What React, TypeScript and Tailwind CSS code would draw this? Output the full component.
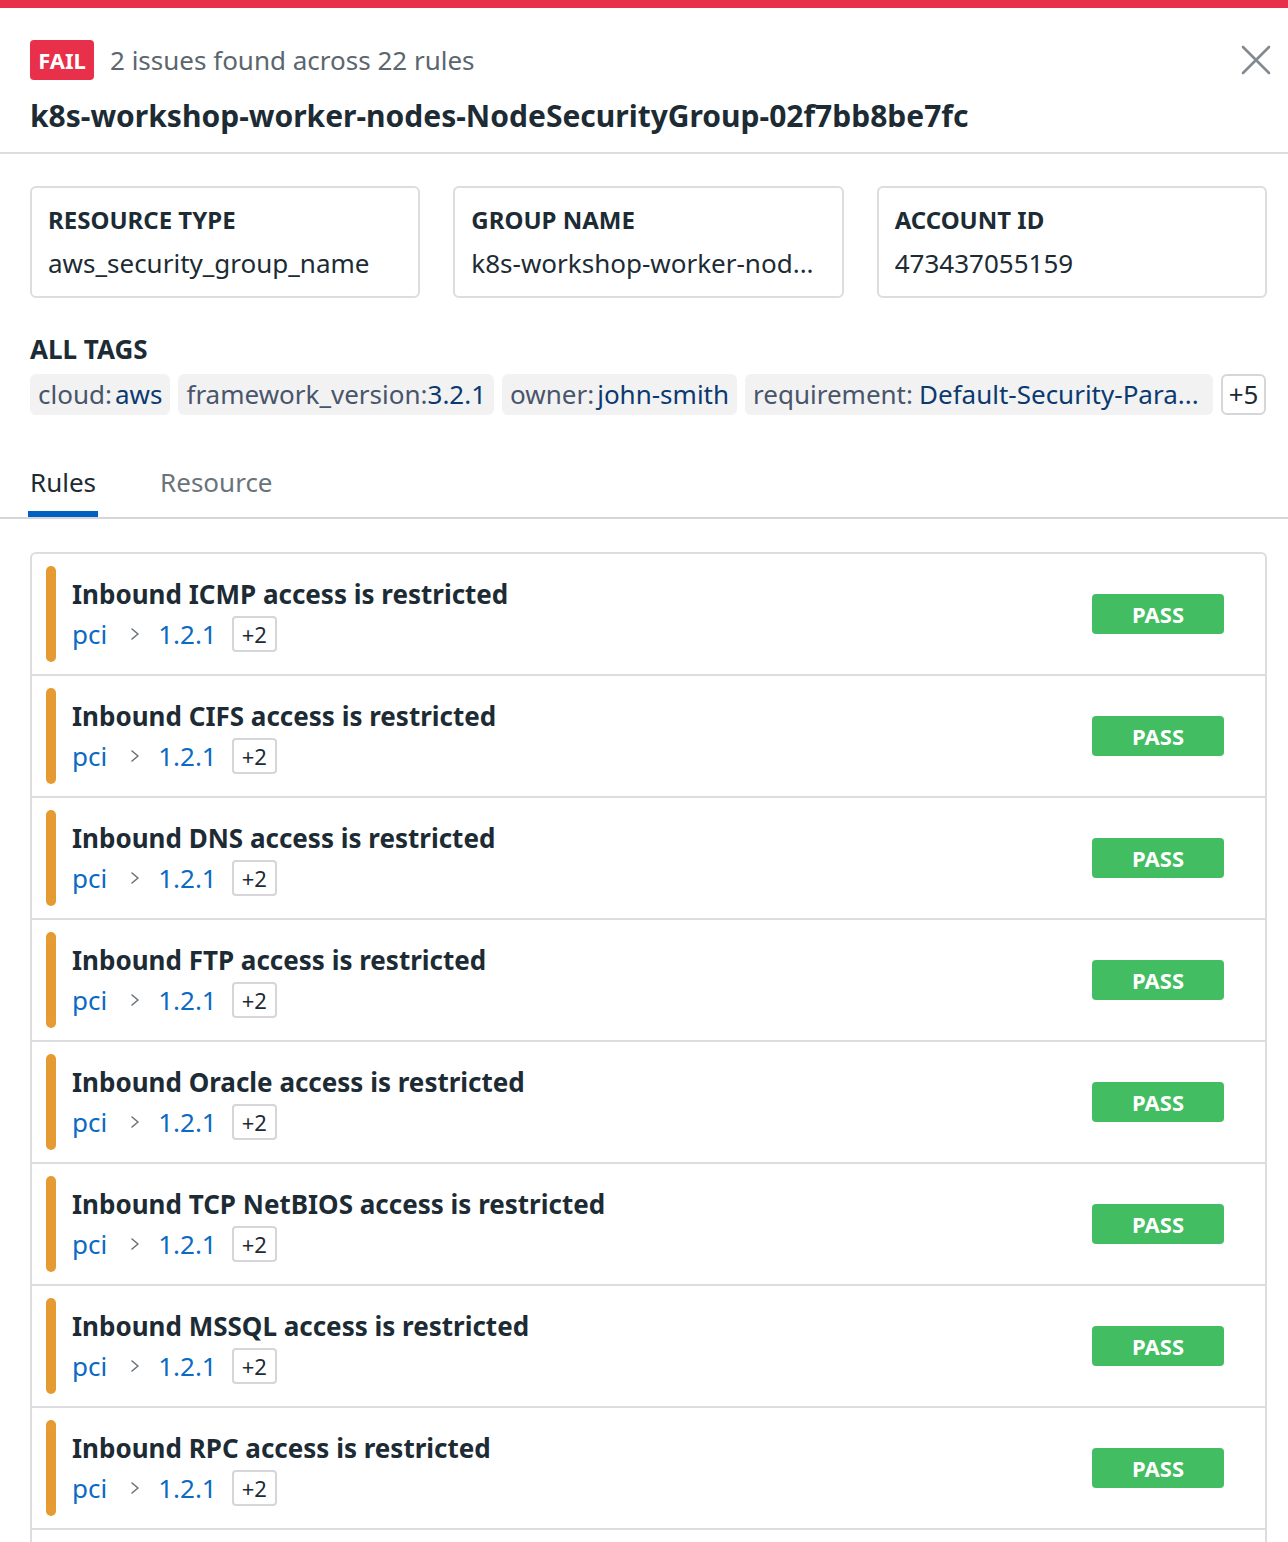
import React from 'react';

const rules = [
  'Inbound ICMP access is restricted',
  'Inbound CIFS access is restricted',
  'Inbound DNS access is restricted',
  'Inbound FTP access is restricted',
  'Inbound Oracle access is restricted',
  'Inbound TCP NetBIOS access is restricted',
  'Inbound MSSQL access is restricted',
  'Inbound RPC access is restricted',
  'Inbound SSH access is restricted',
];

const tags = [
  { k: 'cloud:', v: 'aws', gap: 'gap-[3px]' },
  { k: 'framework_version:', v: '3.2.1', gap: 'gap-0' },
  { k: 'owner:', v: 'john-smith', gap: 'gap-[3px]' },
  { k: 'requirement:', v: 'Default-Security-Para...', gap: 'gap-[6px] pr-[14px]' },
];

const InfoCard = ({ label, value }: { label: string; value: string }) => (
  <div className="flex-1 min-w-0 border-2 border-[#dcdce1] rounded-[6px] px-[16px] pt-[15px] pb-[13px]">
    <div className="text-[24px] leading-[34px] font-bold text-[#1c2b34]">{label}</div>
    <div className="text-[26px] leading-[40px] text-[#1c2b34] truncate mt-[6px]">{value}</div>
  </div>
);

const RuleRow = ({ title }: { title: string }) => (
  <div className="flex items-stretch h-[122px] border-b-2 border-[#dcdce1] pl-[14px] pr-[41px] py-[12px]">
    <div className="w-[10px] rounded-full bg-[#e59a32]" />
    <div className="flex-1 flex flex-col justify-center pl-[16px]">
      <div className="text-[26px] leading-[40px] font-bold text-[#1c2b34]">{title}</div>
      <div className="flex items-center h-[40px]">
        <span className="text-[26px] text-[#0b6ac3]">pci</span>
        <svg className="ml-[22px] mr-[17px]" width="12" height="14" viewBox="0 0 12 14" fill="none">
          <path d="M3 2 L9 7 L3 12" stroke="#6b7278" strokeWidth="1.6" strokeLinecap="round" strokeLinejoin="round" />
        </svg>
        <span className="text-[26px] text-[#0b6ac3]">1.2.1</span>
        <span className="ml-[15px] h-[36px] px-[8px] flex items-center border-2 border-[#d5d5da] rounded-[4px] text-[22px] text-[#1c2b34]">+2</span>
      </div>
    </div>
    <div className="self-center w-[132px] h-[40px] rounded-[4px] bg-[#43bd62] flex items-center justify-center text-white font-bold text-[22px]">
      PASS
    </div>
  </div>
);

export default function App() {
  return (
    <div className="w-[1288px] h-[1542px] overflow-hidden bg-white font-['Noto_Sans',sans-serif]">
      <div className="h-[8px] bg-[#e8304a]" />

      {/* header */}
      <div className="border-b-2 border-[#dcdce1] pl-[30px] pr-[21px] pt-[32px] pb-[15px] flex">
        <div className="flex-1 min-w-0">
          <div className="flex items-center">
            <span className="h-[40px] w-[64px] rounded-[4px] bg-[#e8304a] text-white font-bold text-[22px] flex items-center justify-center">FAIL</span>
            <span className="ml-[16px] text-[26px] text-[#5b666f]">2 issues found across 22 rules</span>
          </div>
          <div className="mt-[15px] text-[30px] leading-[42px] font-bold text-[#1c2b34] whitespace-nowrap">
            k8s-workshop-worker-nodes-NodeSecurityGroup-02f7bb8be7fc
          </div>
        </div>
        <svg className="mt-[5px] mr-[-4px]" width="30" height="30" viewBox="0 0 30 30" fill="none">
          <path d="M2 2 L28 28 M28 2 L2 28" stroke="#82898f" strokeWidth="2.6" strokeLinecap="round" />
        </svg>
      </div>

      {/* cards */}
      <div className="flex gap-[33px] pl-[30px] pr-[21px] pt-[32px]">
        <InfoCard label="RESOURCE TYPE" value="aws_security_group_name" />
        <InfoCard label="GROUP NAME" value="k8s-workshop-worker-nod..." />
        <InfoCard label="ACCOUNT ID" value="473437055159" />
      </div>

      {/* tags */}
      <div className="pl-[30px] pr-[21px] pt-[35px]">
        <div className="text-[26px] leading-[32px] font-bold text-[#1c2b34]">ALL TAGS</div>
        <div className="flex items-center gap-[8px] mt-[9px]">
          {tags.map((t) => (
            <span key={t.k} className={`h-[41px] px-[8px] flex items-center rounded-[6px] bg-[#f2f2f2] text-[26px] whitespace-nowrap ${t.gap}`}>
              <span className="text-[#49556a]">{t.k}</span>
              <span className="text-[#0b3a70]">{t.v}</span>
            </span>
          ))}
          <span className="h-[41px] px-[6px] flex items-center rounded-[6px] border-2 border-[#d5d5da] text-[26px] text-[#1c2b34]">+5</span>
        </div>
      </div>

      {/* tabs */}
      <div className="mt-[49px] border-b-2 border-[#d5d5da] flex px-[28px]">
        <div className="flex flex-col items-center">
          <span className="text-[26px] leading-[36px] text-[#1c2b34] px-[2px]">Rules</span>
          <div className="mt-[11px] h-[6px] w-[70px] bg-[#0061c2]" />
        </div>
        <span className="ml-[62px] text-[26px] leading-[36px] text-[#6b737a]">Resource</span>
      </div>

      {/* rules */}
      <div className="pl-[30px] pr-[21px] pt-[33px]">
        <div className="border-2 border-b-0 border-[#dcdce1] rounded-t-[6px]">
          {rules.map((r) => (
            <RuleRow key={r} title={r} />
          ))}
        </div>
      </div>
    </div>
  );
}
